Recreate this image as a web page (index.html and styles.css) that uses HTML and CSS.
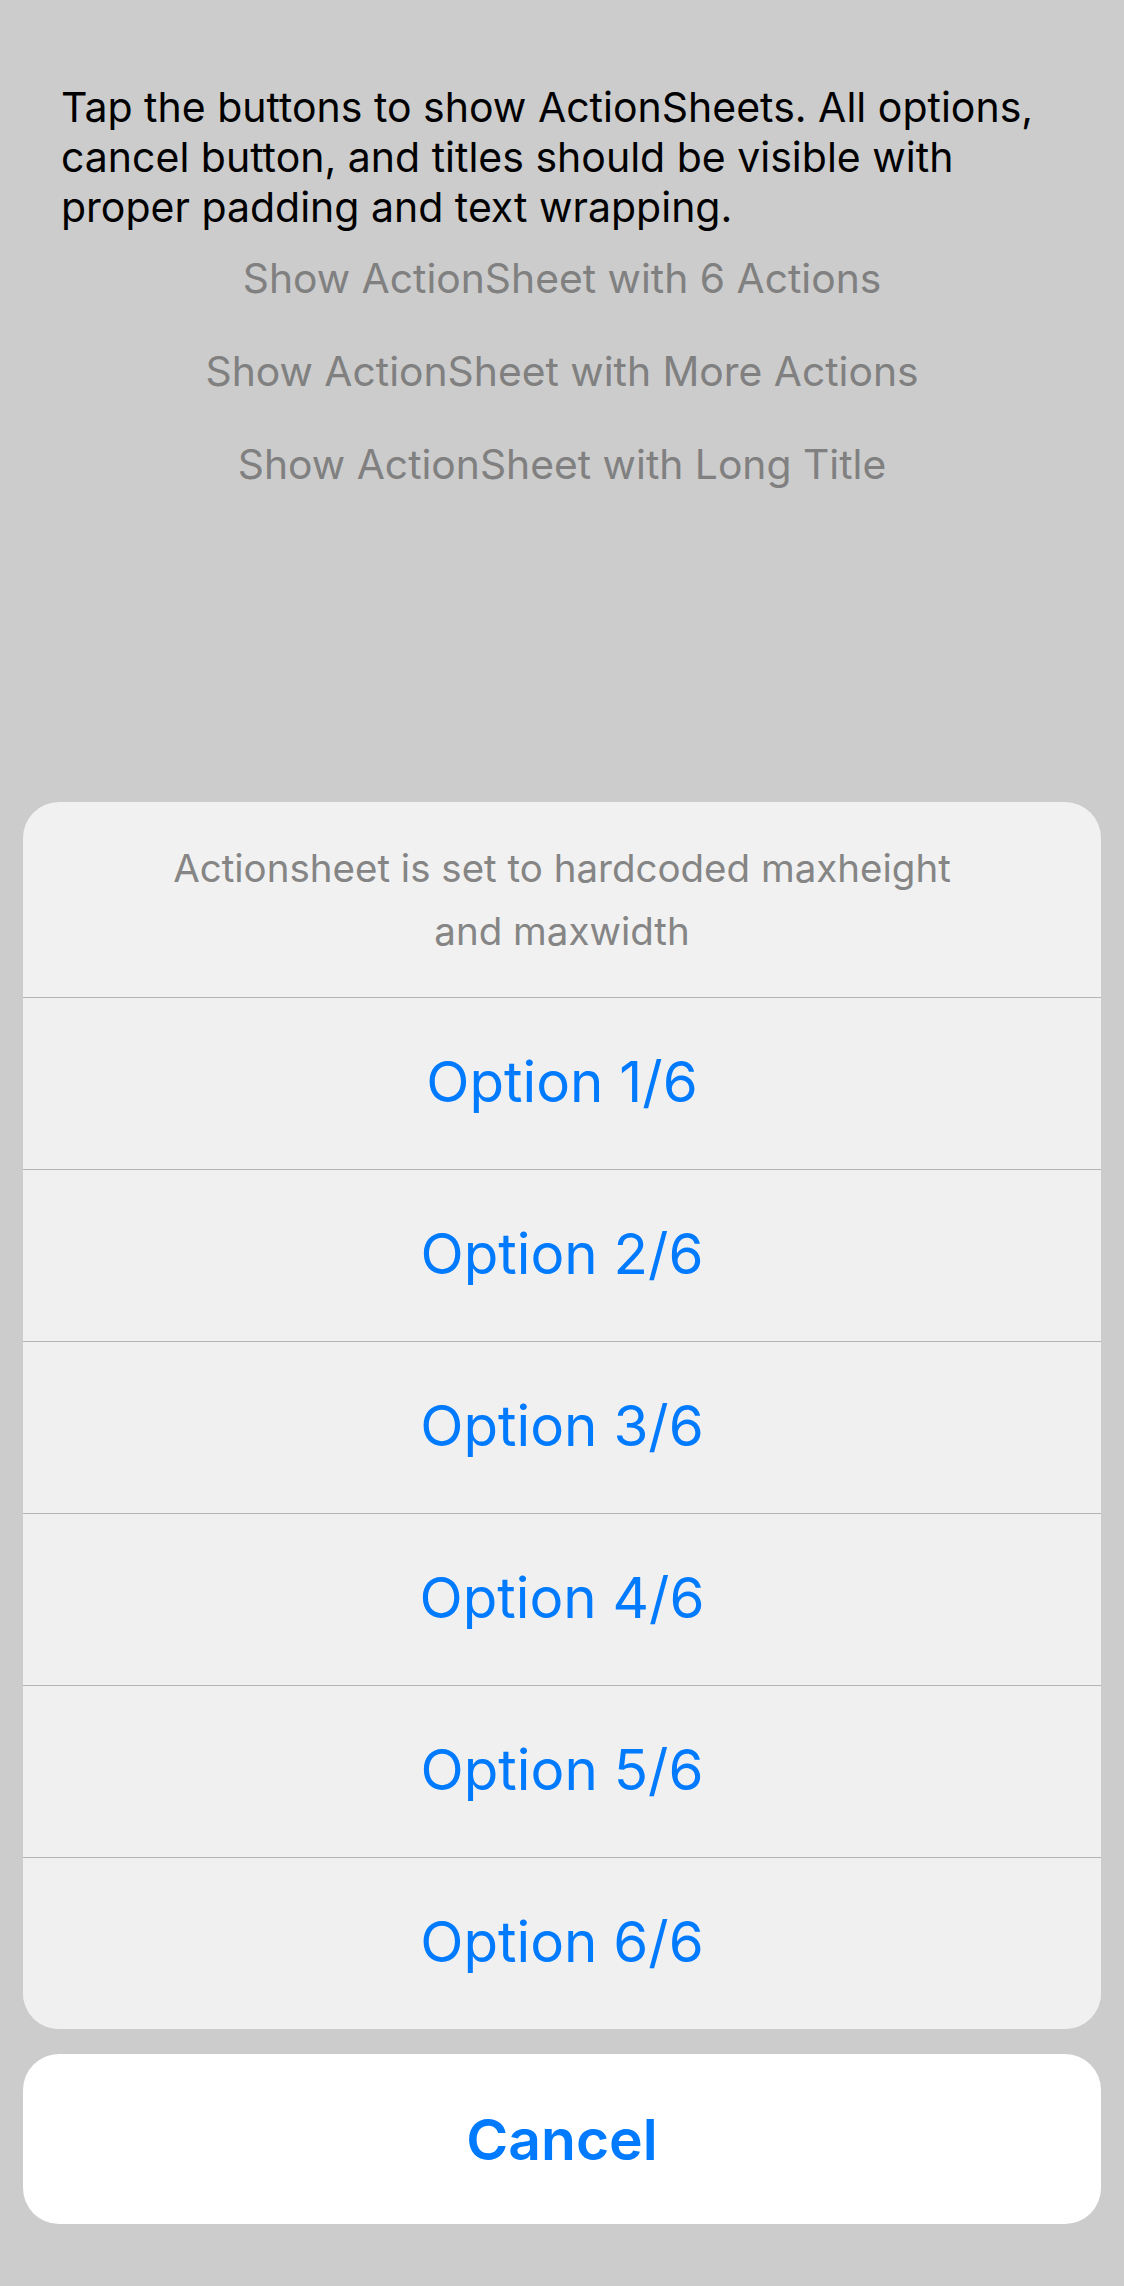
FILE: index.html
```html
<!DOCTYPE html>
<html lang="en">
<head>
<meta charset="utf-8">
<title>ActionSheet</title>
<link rel="stylesheet" href="styles.css">
</head>
<body>
<div class="page">
  <main class="content">
    <p class="intro">Tap the buttons to show ActionSheets. All options, cancel button, and titles should be visible with proper padding and text wrapping.</p>
    <div class="triggers">
      <button class="trigger">Show ActionSheet with 6 Actions</button>
      <button class="trigger">Show ActionSheet with More Actions</button>
      <button class="trigger">Show ActionSheet with Long Title</button>
    </div>
  </main>
  <div class="sheet-wrap">
    <div class="sheet">
      <div class="sheet-header">
        <p class="sheet-title">Actionsheet is set to hardcoded maxheight and maxwidth</p>
      </div>
      <button class="sheet-option">Option 1/6</button>
      <button class="sheet-option">Option 2/6</button>
      <button class="sheet-option">Option 3/6</button>
      <button class="sheet-option">Option 4/6</button>
      <button class="sheet-option">Option 5/6</button>
      <button class="sheet-option">Option 6/6</button>
    </div>
    <button class="sheet-cancel">Cancel</button>
  </div>
</div>
</body>
</html>
```

FILE: styles.css
```css
* {
  box-sizing: border-box;
}

html, body {
  margin: 0;
  padding: 0;
}

body {
  background: #cccccc;
  font-family: Inter, "Noto Sans", "Liberation Sans", sans-serif;
}

.page {
  height: 2286px;
  display: flex;
  flex-direction: column;
  padding-bottom: 62px;
}

.content {
  padding: 82px 61px 0;
}

.intro {
  margin: 0;
  font-size: 41px;
  line-height: 50px;
  color: #000000;
}

.triggers {
  display: flex;
  flex-direction: column;
  align-items: center;
}

.trigger {
  appearance: none;
  border: 0;
  background: none;
  padding: 0;
  font-family: inherit;
  font-size: 40.8px;
  line-height: 93px;
  height: 93px;
  color: #808080;
}

.sheet-wrap {
  margin-top: auto;
  padding: 0 23px;
  display: flex;
  flex-direction: column;
  gap: 25px;
}

.sheet {
  background: #f1f1f1;
  border-radius: 36px;
  overflow: hidden;
  display: flex;
  flex-direction: column;
}

.sheet-header {
  padding: 35px 0 34px;
  display: flex;
  justify-content: center;
}

.sheet-title {
  margin: 0;
  max-width: 820px;
  text-align: center;
  font-size: 38.5px;
  line-height: 63px;
  color: #858585;
}

.sheet-option {
  appearance: none;
  border: 0;
  border-top: 1px solid #b4b4b4;
  background: #f0f0f0;
  height: 172px;
  padding: 0 0 4px;
  font-family: inherit;
  font-size: 56.5px;
  color: #007aff;
}

.sheet-cancel {
  appearance: none;
  border: 0;
  background: #ffffff;
  border-radius: 36px;
  height: 170px;
  padding: 0;
  font-family: inherit;
  font-size: 57px;
  font-weight: 600;
  color: #007aff;
}
```
